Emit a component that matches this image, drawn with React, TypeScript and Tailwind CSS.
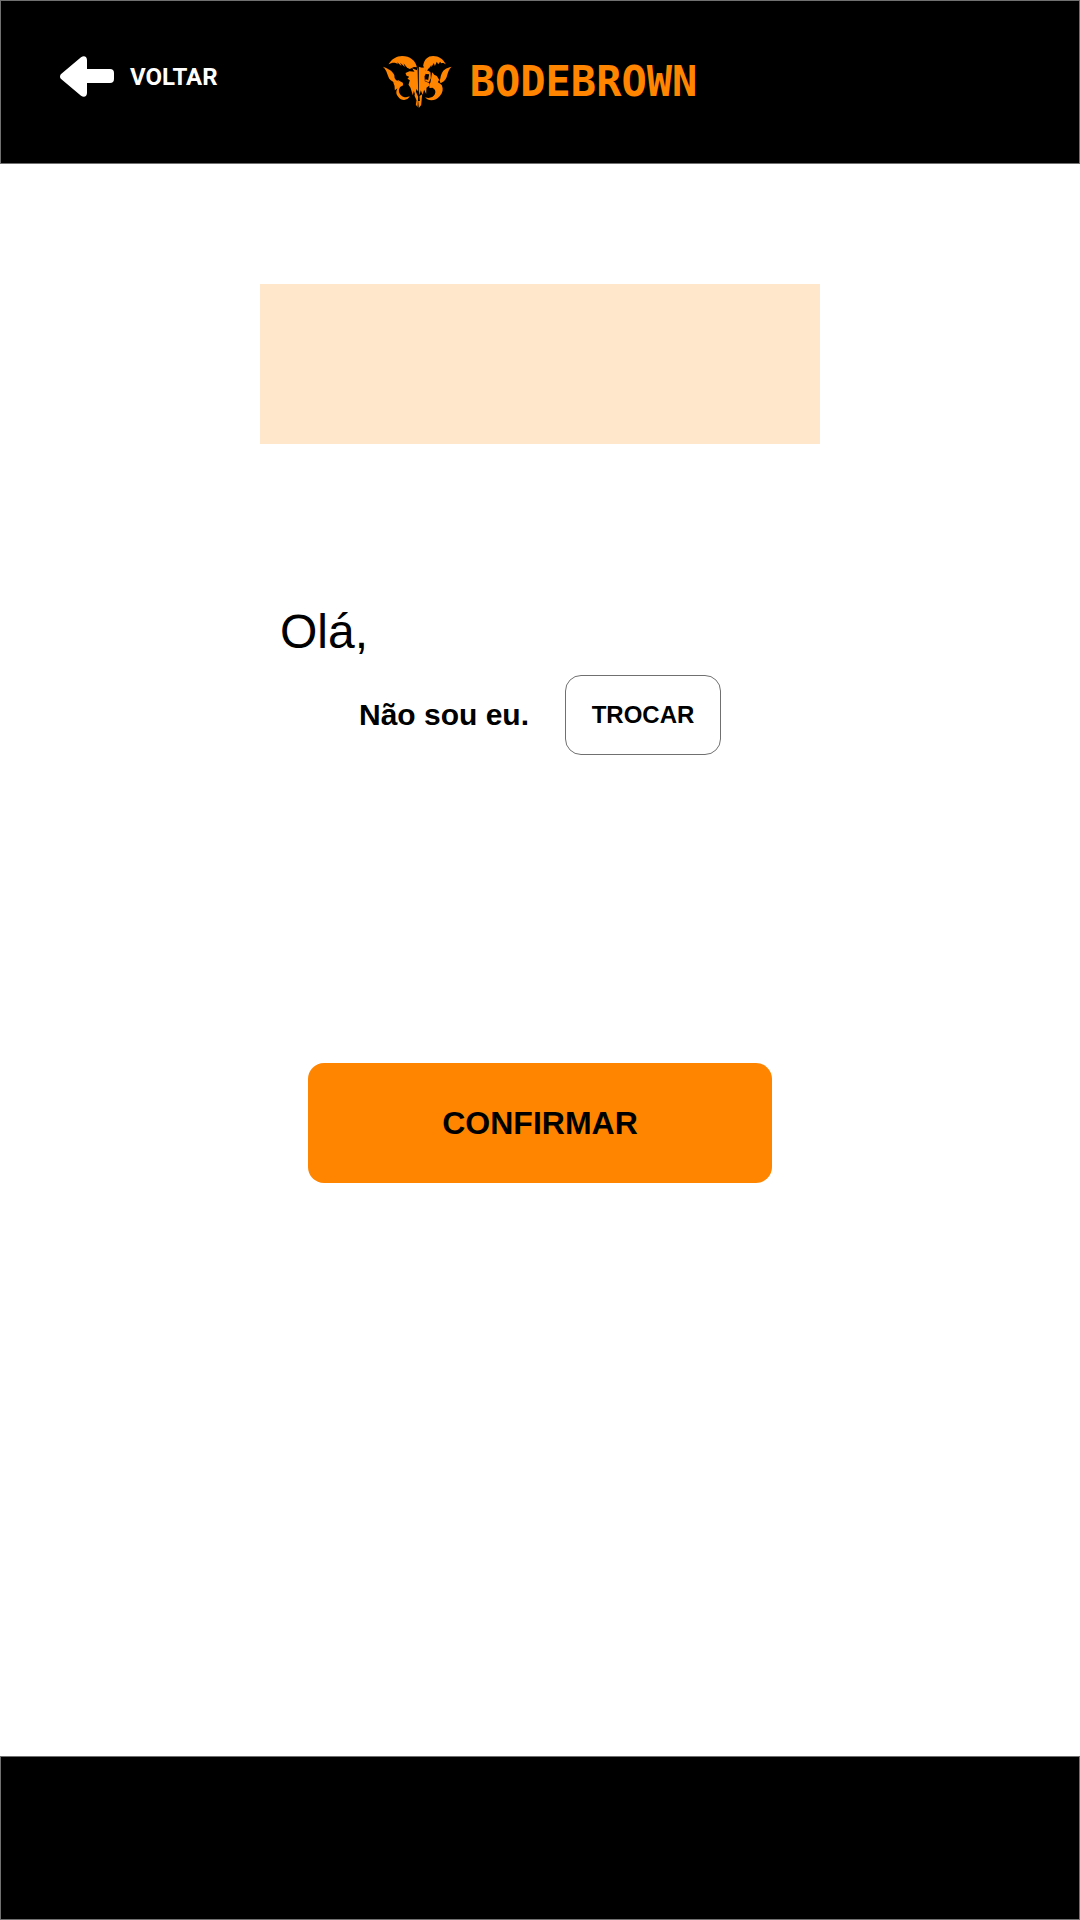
function BackArrow() {
  return (
    <svg width="54" height="41" viewBox="0 0 54 41" fill="currentColor" aria-hidden="true">
      <path d="M0.8 18.2 L21 1.2 C24 -1 27 0.4 27 4 V13 H50 Q54 13 54 17 V23 Q54 27 50 27 H27 V37 C27 40.6 24 42 21 39.8 L0.8 22.8 Q-0.8 20.5 0.8 18.2 Z" />
    </svg>
  );
}

function GoatMark() {
  return (
    <svg width="69" height="52" viewBox="42 33 206 156" fill="currentColor" aria-hidden="true">
      {/* horns */}
      <path d="M58 58 C68 42 82 33 99 33 C122 33 140 47 143 67 L134 66 L122 72 L114 68 L103 55 L107 66 L93 53 L97 63 L84 52 L86 58 C77 51 68 53 58 58 Z" />
      <path d="M230 58 C222 42 209 33 192 33 C176 33 165 43 162 62 L165 68 L172 82 C175 74 178 69 183 66 L186 60 L187 66 L194 54 L197 63 L203 50 L207 58 L213 50 L216 55 C222 52 226 55 230 58 Z" />
      {/* ears */}
      <path d="M41 65 C57 71 70 78 75 89 C77 96 74 101 84 107 L90 104 L86 112 L76 113 C66 108 60 104 57 94 C53 83 51 74 41 65 Z" />
      <path d="M247 65 C231 69 221 75 217 87 C213 96 215 102 211 106 L214 115 C226 109 231 103 234 91 C237 81 239 73 247 65 Z" />
      {/* cheeks and lower curls */}
      <path d="M72 112 L84 111 L90 107 L101 113 L102 121 L94 125 C87 133 88 144 97 152 C105 158 115 157 122 154 C115 168 96 168 87 155 C79 147 81 138 85 130 L77 136 L76 122 Z" />
      <path d="M189 82 L195 89 L203 93 L210 104 L206 112 L213 116 L218 121 C223 133 221 143 212 153 C201 168 177 170 168 157 C180 161 192 158 197 148 C201 139 198 132 190 128 L181 129 L180 119 L184 112 L186 100 Z" />
      {/* skull */}
      <path d="M109 84 L121 79 L136 80 L129 70 L143 76 L145 65 L147 140 L142 132 L138 150 L134 137 L131 151 L124 128 L118 119 L122 106 L115 101 L120 95 L112 92 Z" />
      <path d="M149 65 L158 68 L168 67 L168 76 L180 78 L183 84 L171 84 L166 94 L167 109 L180 114 L180 122 L172 128 L171 147 L165 134 L160 149 L155 136 L151 151 L149 135 Z" />
      <path d="M169 81 L184 82 L185 100 L179 112 L168 108 L169 103 L177 105 L180 88 L170 87 Z" />
      <path d="M139 137 L147 155 L145 186 L140 179 L142 166 L136 152 Z" />
      <path d="M151 153 L159 148 L156 180 L149 189 L147 168 L152 168 Z" />
    </svg>
  );
}

export default function App() {
  return (
    <div className="flex min-h-screen flex-col bg-white font-['Liberation_Sans',Arial,sans-serif] text-black">
      <header className="grid grid-cols-[1fr_auto_1fr] items-start border border-[#707070] bg-black py-[55px]">
        <button
          type="button"
          className="ml-[59px] flex items-center gap-4 justify-self-start font-['Roboto',sans-serif] text-2xl font-bold text-white"
        >
          <BackArrow />
          <span>VOLTAR</span>
        </button>
        <div className="flex items-center gap-[18px] text-[#ff8500]">
          <GoatMark />
          <span className="font-['DejaVu_Sans_Mono',monospace] text-[42px] leading-[52px] font-bold">BODEBROWN</span>
        </div>
      </header>

      <main className="flex flex-1 flex-col items-center px-6 pt-[120px] pb-16">
        <div className="h-40 w-full max-w-[560px] bg-[#ffe7cc]" />
        <h1 className="mt-40 w-full max-w-[560px] px-5 text-5xl leading-14">Olá,</h1>
        <div className="mt-[15px] flex items-center gap-9">
          <p className="text-3xl font-bold">Não sou eu.</p>
          <button
            type="button"
            className="h-20 w-[156px] rounded-2xl border border-[#707070] bg-white text-2xl font-bold"
          >
            TROCAR
          </button>
        </div>
        <button
          type="button"
          className="mt-[308px] h-[120px] w-full max-w-[464px] rounded-2xl bg-[#ff8500] text-[32px] font-bold"
        >
          CONFIRMAR
        </button>
      </main>

      <footer className="h-[164px] border border-[#707070] bg-black" />
    </div>
  );
}
